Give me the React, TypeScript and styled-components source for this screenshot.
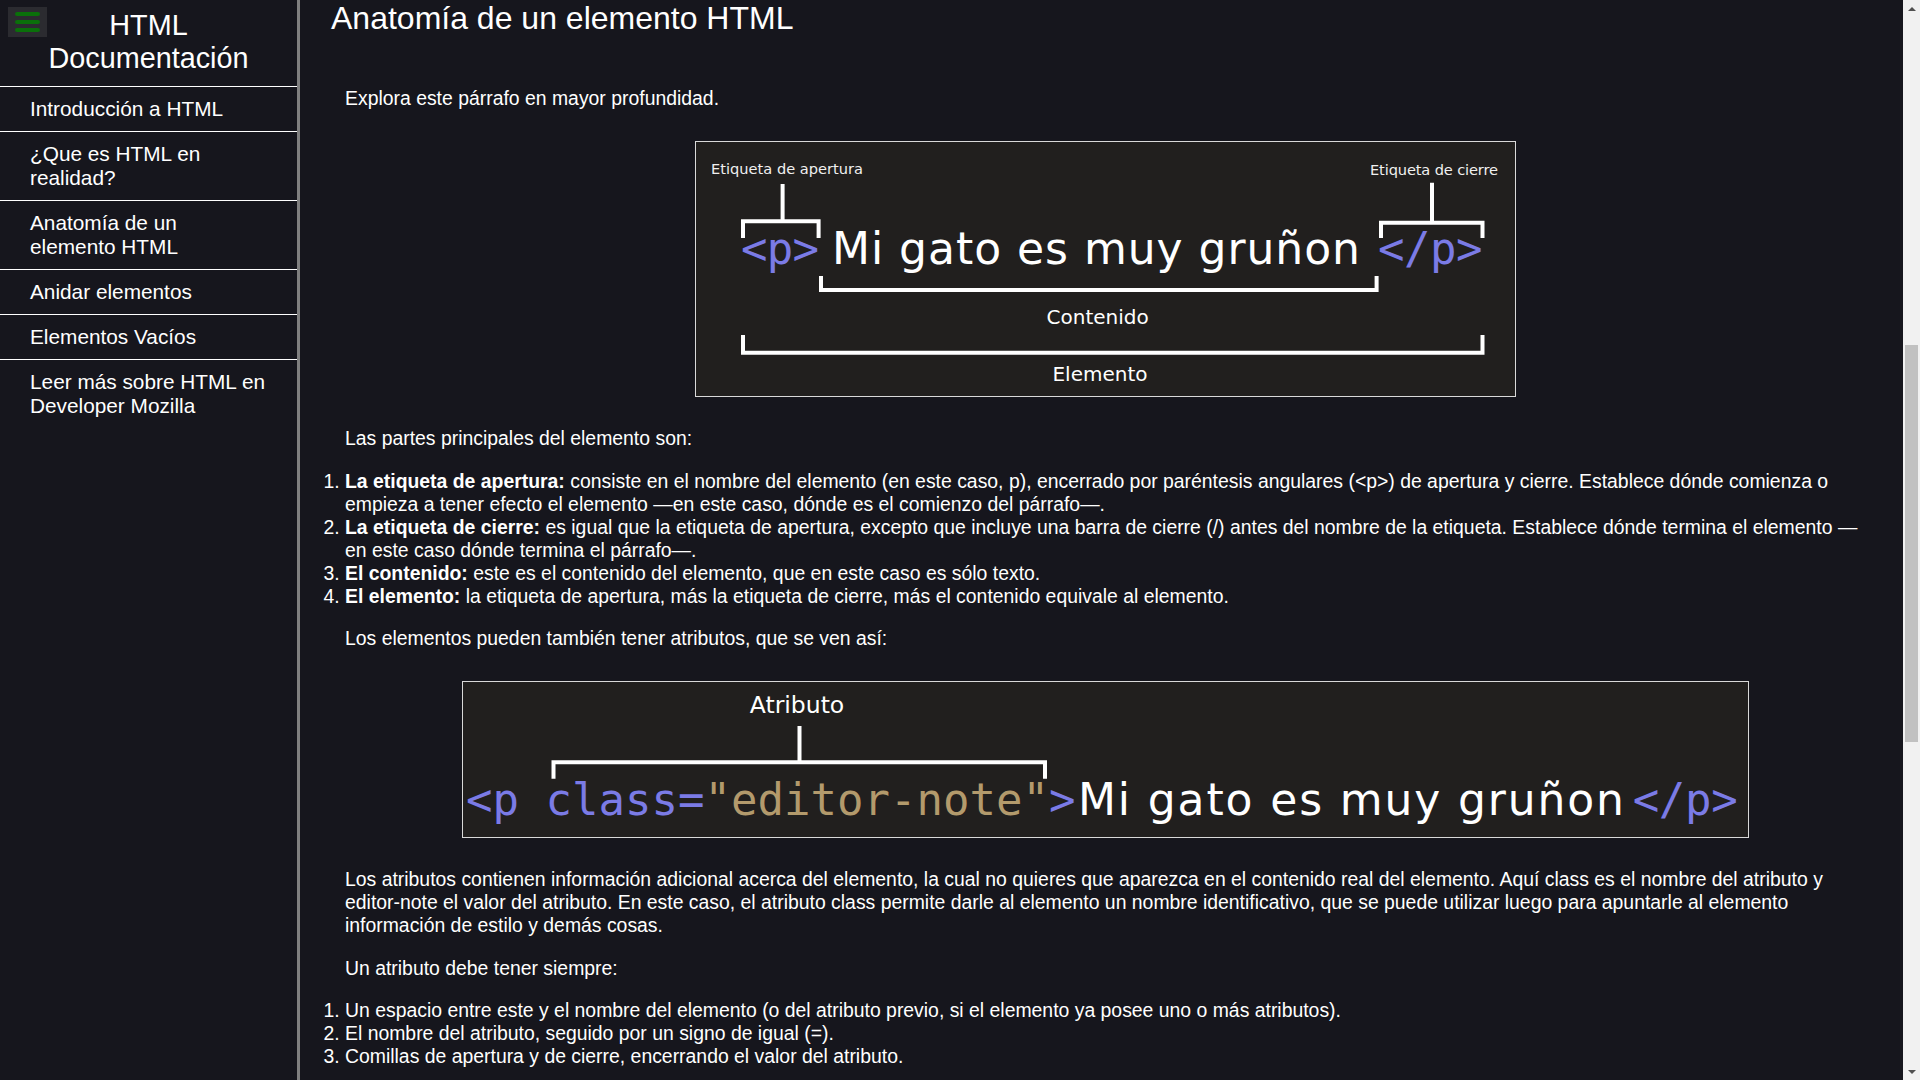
import React from 'react';
import styled, { createGlobalStyle } from 'styled-components';

const GlobalStyle = createGlobalStyle`
  body {
    margin: 0;
    background-color: #16161d;
    color: #ffffff;
    font-family: 'Liberation Sans', Arial, sans-serif;
  }
`;

const Layout = styled.div`
  display: grid;
  grid-template-columns: 300px minmax(0, 1fr) 17px;
  height: 100vh;
  overflow: hidden;
`;

const Sidebar = styled.nav`
  box-sizing: border-box;
  border-right: 3px solid #808080;
  background-color: #16161d;
`;

const SidebarHeader = styled.header`
  position: relative;
  padding: 9px 0 11px;
  text-align: center;
`;

const SidebarTitle = styled.h1`
  margin: 0;
  font-size: 28.8px;
  line-height: 33px;
  font-weight: 400;
`;

const MenuButton = styled.button`
  position: absolute;
  top: 7px;
  left: 8px;
  width: 39px;
  height: 30px;
  padding: 0;
  border: none;
  background-color: #2b2b30;
  display: flex;
  flex-direction: column;
  align-items: center;
  justify-content: center;
  gap: 4px;
  cursor: pointer;
`;

const MenuBar = styled.span`
  display: block;
  width: 25px;
  height: 4px;
  border-radius: 2px;
  background-color: #0a700a;
`;

const NavList = styled.ul`
  margin: 0;
  padding: 0;
  list-style: none;
`;

const NavItem = styled.li`
  border-top: 1px solid #ffffff;
`;

const NavLink = styled.a`
  display: block;
  padding: 10px 30px 10px 30px;
  color: #ffffff;
  text-decoration: none;
  font-size: 20.8px;
  line-height: 24px;
`;

const Main = styled.main`
  padding: 0 37px 0 31px;
  overflow: hidden;
`;

const Section = styled.section`
  padding-bottom: 40px;
`;

const SectionTitle = styled.h2`
  margin: 0 0 50px;
  font-size: 32px;
  line-height: 37px;
  font-weight: 400;
`;

const Paragraph = styled.p`
  margin: 19.5px 0 19.5px 14px;
  font-size: 19.4px;
  line-height: 23px;
`;

const OrderedList = styled.ol`
  margin: 19.5px 0;
  padding-left: 14px;
  font-size: 19.4px;
  line-height: 23px;
`;

const FigureRow = styled.div`
  display: flex;
  justify-content: center;
  margin: 30.5px 0 30.5px 14px;
`;

const Frame = styled.div`
  border: 1px solid #d9d9d9;
  line-height: 0;
`;

const Diagram = styled.svg`
  display: block;
  background-color: #211f1e;
`;

/* the page scrollbar, as it shows in the screenshot */
const Scrollbar = styled.div`
  display: flex;
  flex-direction: column;
  background-color: #f1f1f1;
`;

const ScrollArrow = styled.div<{ $down?: boolean }>`
  display: flex;
  align-items: center;
  justify-content: center;
  height: 17px;

  &::before {
    content: '';
    width: 0;
    height: 0;
    border-left: 4px solid transparent;
    border-right: 4px solid transparent;
    ${({ $down }) => ($down ? 'border-top: 4px solid #505050;' : 'border-bottom: 4px solid #505050;')}
  }
`;

const ScrollTrack = styled.div`
  flex: 1;
  padding: 328px 2px 0;
`;

const ScrollThumb = styled.div`
  height: 397px;
  background-color: #c1c1c1;
`;

const BLUE = '#7b7be6';
const TAN = '#b39a6c';
const SANS = "'DejaVu Sans', 'Liberation Sans', sans-serif";
const MONO = "'DejaVu Sans Mono', 'Liberation Mono', monospace";

const ElementDiagram = () => (
  <Diagram width={819} height={254} viewBox="0 0 819 254">
    <g stroke="#ffffff" strokeWidth={4} fill="none">
      <path d="M47 96V79.3H122.6V96M86.6 79.3V42" />
      <path d="M685 96V80.7H786.5V96M736 80.7V40.7" />
      <path d="M125 134V148H680.6V134" />
      <path d="M47 193V210.7H786.5V193" />
    </g>
    <text x={15} y={32.2} fontFamily={SANS} fontSize={14.6} fill="#f0f0f0" textLength={152}>
      Etiqueta de apertura
    </text>
    <text x={674} y={33.1} fontFamily={SANS} fontSize={14.6} fill="#f0f0f0" textLength={128}>
      Etiqueta de cierre
    </text>
    <text x={45} y={122.3} fontFamily={MONO} fontSize={44} fill={BLUE} textLength={78}>
      {'<p>'}
    </text>
    <text x={136} y={122.3} fontFamily={SANS} fontSize={44} fill="#ffffff" textLength={528}>
      Mi gato es muy gruñon
    </text>
    <text x={682} y={122.3} fontFamily={MONO} fontSize={44} fill={BLUE} textLength={104.5}>
      {'</p>'}
    </text>
    <text x={401.6} y={182} fontFamily={SANS} fontSize={20} fill="#ffffff" textAnchor="middle">
      Contenido
    </text>
    <text x={404} y={239} fontFamily={SANS} fontSize={20} fill="#ffffff" textAnchor="middle">
      Elemento
    </text>
  </Diagram>
);

const AttributeDiagram = () => (
  <Diagram width={1285} height={155} viewBox="0 0 1285 155">
    <g stroke="#ffffff" strokeWidth={4} fill="none">
      <path d="M90.5 96.7V80.3H582V96.7M336.5 80.3V44" />
    </g>
    <text x={334} y={31} fontFamily={SANS} fontSize={23.5} fill="#ffffff" textAnchor="middle">
      Atributo
    </text>
    <text x={3} y={133.3} fontFamily={MONO} fontSize={44} fill={BLUE} textLength={238.5}>
      {'<p class='}
    </text>
    <text x={241.5} y={133.3} fontFamily={MONO} fontSize={44} fill={TAN} textLength={344.5}>
      {'"editor-note"'}
    </text>
    <text x={586} y={133.3} fontFamily={MONO} fontSize={44} fill={BLUE}>
      {'>'}
    </text>
    <text x={615} y={133.3} fontFamily={SANS} fontSize={44} fill="#ffffff" textLength={546}>
      Mi gato es muy gruñon
    </text>
    <text x={1169.7} y={133.3} fontFamily={MONO} fontSize={44} fill={BLUE} textLength={105}>
      {'</p>'}
    </text>
  </Diagram>
);

const navItems = [
  { href: '#introduccion', label: 'Introducción a HTML' },
  { href: '#que-es-html', label: '¿Que es HTML en realidad?' },
  { href: '#anatomia', label: 'Anatomía de un elemento HTML' },
  { href: '#anidar', label: 'Anidar elementos' },
  { href: '#vacios', label: 'Elementos Vacíos' },
  { href: '#leer-mas', label: 'Leer más sobre HTML en Developer Mozilla' },
];

export default function App() {
  return (
    <>
      <GlobalStyle />
      <Layout>
        <Sidebar>
          <SidebarHeader>
            <MenuButton aria-label="Menú">
              <MenuBar />
              <MenuBar />
              <MenuBar />
            </MenuButton>
            <SidebarTitle>
              HTML
              <br />
              Documentación
            </SidebarTitle>
          </SidebarHeader>
          <NavList>
            {navItems.map((item) => (
              <NavItem key={item.href}>
                <NavLink href={item.href}>{item.label}</NavLink>
              </NavItem>
            ))}
          </NavList>
        </Sidebar>

        <Main>
          <Section id="anatomia">
            <SectionTitle>Anatomía de un elemento HTML</SectionTitle>
            <Paragraph>Explora este párrafo en mayor profundidad.</Paragraph>
            <FigureRow>
              <Frame>
                <ElementDiagram />
              </Frame>
            </FigureRow>
            <Paragraph>Las partes principales del elemento son:</Paragraph>
            <OrderedList>
              <li>
                <strong>La etiqueta de apertura:</strong> consiste en el nombre del elemento (en este caso, p), encerrado por paréntesis
                angulares (&lt;p&gt;) de apertura y cierre. Establece dónde comienza o empieza a tener efecto el elemento —en este caso, dónde
                es el comienzo del párrafo—.
              </li>
              <li>
                <strong>La etiqueta de cierre:</strong> es igual que la etiqueta de apertura, excepto que incluye una barra de cierre (/) antes
                del nombre de la etiqueta. Establece dónde termina el elemento —en este caso dónde termina el párrafo—.
              </li>
              <li>
                <strong>El contenido:</strong> este es el contenido del elemento, que en este caso es sólo texto.
              </li>
              <li>
                <strong>El elemento:</strong> la etiqueta de apertura, más la etiqueta de cierre, más el contenido equivale al elemento.
              </li>
            </OrderedList>
            <Paragraph>Los elementos pueden también tener atributos, que se ven así:</Paragraph>
            <FigureRow>
              <Frame>
                <AttributeDiagram />
              </Frame>
            </FigureRow>
            <Paragraph>
              Los atributos contienen información adicional acerca del elemento, la cual no quieres que aparezca en el contenido real del
              elemento. Aquí class es el nombre del atributo y editor-note el valor del atributo. En este caso, el atributo class permite darle al
              elemento un nombre identificativo, que se puede utilizar luego para apuntarle al elemento información de estilo y demás cosas.
            </Paragraph>
            <Paragraph>Un atributo debe tener siempre:</Paragraph>
            <OrderedList>
              <li>Un espacio entre este y el nombre del elemento (o del atributo previo, si el elemento ya posee uno o más atributos).</li>
              <li>El nombre del atributo, seguido por un signo de igual (=).</li>
              <li>Comillas de apertura y de cierre, encerrando el valor del atributo.</li>
            </OrderedList>
          </Section>
        </Main>

        <Scrollbar aria-hidden="true">
          <ScrollArrow />
          <ScrollTrack>
            <ScrollThumb />
          </ScrollTrack>
          <ScrollArrow $down />
        </Scrollbar>
      </Layout>
    </>
  );
}
